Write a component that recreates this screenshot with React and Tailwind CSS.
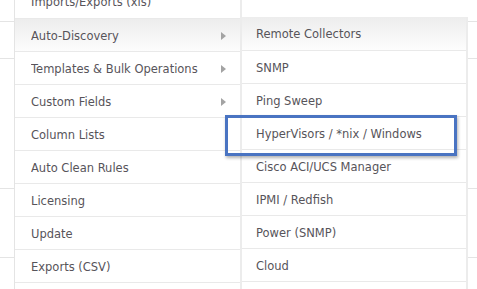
import React from 'react';

const leftItems = [
  { label: 'Imports/Exports (xls)' },
  { label: 'Auto-Discovery', sub: true, active: true },
  { label: 'Templates & Bulk Operations', sub: true },
  { label: 'Custom Fields', sub: true },
  { label: 'Column Lists' },
  { label: 'Auto Clean Rules' },
  { label: 'Licensing' },
  { label: 'Update' },
  { label: 'Exports (CSV)' },
  { label: '' },
];

const rightItems = [
  { label: 'Remote Collectors', active: true },
  { label: 'SNMP' },
  { label: 'Ping Sweep' },
  { label: 'HyperVisors / *nix / Windows' },
  { label: 'Cisco ACI/UCS Manager' },
  { label: 'IPMI / Redfish' },
  { label: 'Power (SNMP)' },
  { label: 'Cloud' },
  { label: '' },
];

const Arrow = () => (
  <svg width="5" height="8" viewBox="0 0 5 8" className="shrink-0 -mt-[2px]">
    <path d="M0 0 L5 4 L0 8 Z" fill="#a3a3a3" />
  </svg>
);

const Row = ({ item, first, pad }) => (
  <div
    className={`h-[33px] flex items-center pt-[3px] ${pad} ${first ? '' : 'border-t border-[#e9e9e9]'} ${
      item.active ? 'bg-gradient-to-b from-[#ededed] to-[#fdfdfd]' : 'bg-white'
    }`}
  >
    <span className="flex-1 truncate">{item.label}</span>
    {item.sub && <Arrow />}
  </div>
);

export default function App() {
  return (
    <div
      className="relative w-[477px] h-[289px] overflow-hidden bg-white text-[#57545a] text-[11.5px]"
      style={{ fontFamily: '"DejaVu Sans", Verdana, sans-serif' }}
    >
      {/* page behind the menu */}
      <div className="flex flex-col">
        <div className="h-[22px] border-b border-[#e4e4e4]" />
        <div className="h-[37px] border-b border-[#e4e4e4]" />
        <div className="h-[130px] border-b border-[#e4e4e4]" />
        <div className="h-[69px] border-b border-[#e4e4e4]" />
      </div>

      {/* menu */}
      <div className="absolute left-[14px] top-[-15px] flex items-start">
        <div className="w-[228px] border-l border-[#e4e4e4] border-r-2 border-r-[#ececec] bg-white">
          {leftItems.map((item, i) => (
            <Row key={i} item={item} first={i === 0} pad="pl-[16px] pr-[14px]" />
          ))}
        </div>
        <div className="mt-[32px] w-[226px] border-r-2 border-[#ececec] bg-white">
          {rightItems.map((item, i) => (
            <Row key={i} item={item} first={i === 0} pad="pl-[14px] pr-[10px]" />
          ))}
        </div>
      </div>

      {/* highlight */}
      <div className="absolute left-[225px] top-[115px] w-[232px] h-[41px] border-[3px] border-[#4a74c2] shadow-[1px_2px_3px_rgba(0,0,0,0.3)]" />
    </div>
  );
}
